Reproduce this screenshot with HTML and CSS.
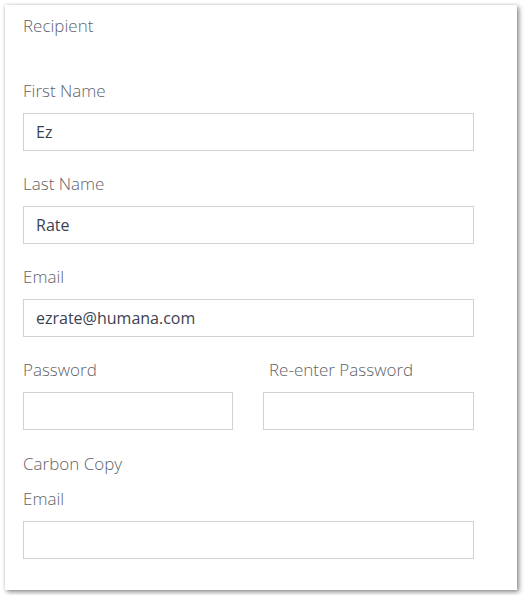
FILE: index.html
```html
<!DOCTYPE html>
<html>
<head>
<meta charset="utf-8">
<link rel="stylesheet" href="styles.css">
</head>
<body>
<div class="card">
  <div class="section-title">Recipient</div>
  <div class="form">
    <div class="field">
      <label class="label">First Name</label>
      <div class="input">Ez</div>
    </div>
    <div class="field">
      <label class="label">Last Name</label>
      <div class="input">Rate</div>
    </div>
    <div class="field">
      <label class="label">Email</label>
      <div class="input">ezrate@humana.com</div>
    </div>
    <div class="row">
      <div class="field">
        <label class="label">Password</label>
        <div class="input"></div>
      </div>
      <div class="field">
        <label class="label label-offset">Re-enter Password</label>
        <div class="input"></div>
      </div>
    </div>
    <div class="cc">
      <div class="cc-title">Carbon Copy</div>
      <div class="field">
        <label class="label">Email</label>
        <div class="input"></div>
      </div>
    </div>
  </div>
</div>
</body>
</html>
```
FILE: styles.css
```css
* { box-sizing: border-box; }
html, body { margin: 0; padding: 0; background: #fff; }
body {
  padding: 5px;
  font-family: "Open Sans", "Liberation Sans", sans-serif;
}
.card {
  width: 512px;
  height: 585px;
  background: #fff;
  padding: 10px 43px 0 18px;
  box-shadow: 2px 2px 5px rgba(0,0,0,0.45), 0 0 3px rgba(0,0,0,0.12);
}
.section-title, .label, .cc-title {
  display: block;
  font-size: 17px;
  line-height: 22px;
  font-weight: 300;
  color: #5f6368;
}
.label, .cc-title { padding-top: 1px; }
.form {
  margin-top: 42px;
  display: flex;
  flex-direction: column;
  gap: 21px;
}
.field {
  display: flex;
  flex-direction: column;
  gap: 11px;
}
.row {
  display: grid;
  grid-template-columns: 210px 211px;
  column-gap: 30px;
}
.label-offset { padding-left: 6px; }
.cc {
  margin-top: 1px;
  display: flex;
  flex-direction: column;
  gap: 12px;
}
.input {
  height: 38px;
  border: 1px solid #cfd3d8;
  background: #fff;
  padding: 0 12px;
  font-size: 16px;
  line-height: 36px;
  font-weight: 400;
  color: #3b4252;
}
```
